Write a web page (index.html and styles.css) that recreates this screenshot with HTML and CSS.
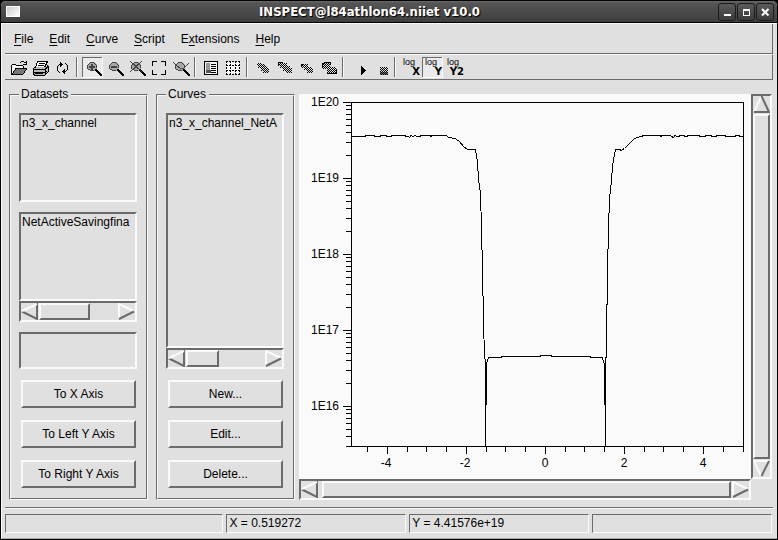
FILE: index.html
```html
<!DOCTYPE html>
<html lang="en">
<head>
<meta charset="utf-8">
<title>INSPECT@l84athlon64.niiet v10.0</title>
<link rel="stylesheet" href="styles.css">
</head>
<body>
<div class="window">
  <header class="titlebar">
    <span class="sysmenu"></span>
    <h1 class="title">INSPECT@l84athlon64.niiet v10.0</h1>
    <div class="wm">
      <button class="wm-btn" aria-label="Minimize"><svg viewBox="0 0 16 16"><path d="M5 11h7" stroke-width="2"/></svg></button>
      <button class="wm-btn" aria-label="Maximize"><svg viewBox="0 0 16 16"><path d="M5 5.500h7M5.500 6v5M11.500 6v5M5 11.500h7M5 6.500h7"/></svg></button>
      <button class="wm-btn" aria-label="Close"><svg viewBox="0 0 16 16"><path d="M5 5l6.500 6.500M11.500 5L5 11.500" stroke-width="2"/></svg></button>
    </div>
  </header>

  <div class="client">
    <nav class="menubar">
      <button class="menu"><u>F</u>ile</button>
      <button class="menu"><u>E</u>dit</button>
      <button class="menu"><u>C</u>urve</button>
      <button class="menu"><u>S</u>cript</button>
      <button class="menu">E<u>x</u>tensions</button>
      <button class="menu"><u>H</u>elp</button>
    </nav>

    <div class="toolbar">
      <svg class="defs" aria-hidden="true">
        <defs>
          <pattern id="dots" width="2" height="2" patternUnits="userSpaceOnUse"><path class="k" d="M0 0h1v1H0zM1 1h1v1H1z"/></pattern>
          <g id="lens">
            <path d="M8 5h4l3 3v3l-3 3H8l-3-3V8z" fill="#a8a8a8"/>
            <path d="M8 5.500h4M8 13.500h4M5.500 8v4M14.500 8v3M6 7.500h1M7 6.500h1M12 6.500h1M13 7.500h1M6 12.500h2" fill="none" stroke="#444"/>
            <path d="M13 12h2v1h1v1h1v1h1v1h1v1h1v2h-2v-1h-1v-1h-1v-1h-1v-1h-1v-1h-1z" fill="#000"/>
          </g>
        </defs>
      </svg>
      <button class="tool" aria-label="Open"><svg viewBox="0 0 22 22">
        <path class="k" d="M3 8h1v10H3zM4 7h4v1H4zM8 8h7v1H8zM15 9h1v3h-1z"/>
        <path d="M4 8h4v1h7v3H8l-4 6z" fill="#f5f5f5"/>
        <path d="M8 12h11l-4 5H4z" fill="#777"/>
        <path class="s" d="M7 11.500h12M18.500 12v1M17.500 13v1M16.500 14v2M15.500 16v1M3 17.500h12M7.500 12v1M6.500 13v1M5.500 14v2M4.500 16v1M12 5.500h1M13 4.500h3M16 5.500h2M18.500 4v4M15 7.500h3"/>
      </svg></button>
      <button class="tool" aria-label="Print"><svg viewBox="0 0 22 22">
        <path d="M8 4h9l-3 7H5z" fill="#fff"/>
        <path d="M3 12l3-2h10l3-2v6l-4 4H4l-1-1z" fill="#bbb"/>
        <path class="s" d="M7.500 4.500h10l-3 6M7.500 4.500l-2 6M9 6.500h6M8 8.500h6M5.500 10.500h-1l-1 1v5l1 2h10l4-4v-5l-1-1h-1M3 12.500h12l3-3M15.500 12v6M4 15.500h11"/>
        <path class="k" d="M5 16h8v1H5zM16 14h1v1h-1zM16 16h1v1h-1z"/>
      </svg></button>
      <button class="tool" aria-label="Reload"><svg viewBox="0 0 22 22">
        <path class="k" d="M8 5h1v1h1v1h1v1h-1v1H9v1H8V8H7V7h1zM6 8h1v1H6zM5 9h1v5H5zM6 14h1v1H6zM7 15h1v1H7zM13 17h-1v-1h-1v-1h-1v-1h1v-1h1v-1h1v2h1v1h-1zM14 13h1v1h-1zM15 8h1v5h-1zM14 7h1v1h-1zM13 6h1v1h-1z"/>
      </svg></button>
      <span class="sep"></span>
      <button class="tool is-on" aria-label="Zoom in" aria-pressed="true"><svg viewBox="0 0 22 22"><use href="#lens"/><path d="M7 9h6v2H7zM9 7h2v6H9z" fill="#444"/></svg></button>
      <button class="tool" aria-label="Zoom out"><svg viewBox="0 0 22 22"><use href="#lens"/><path d="M7 9h6v2H7z" fill="#444"/></svg></button>
      <button class="tool" aria-label="Zoom reset"><svg viewBox="0 0 22 22"><use href="#lens"/><path d="M4 4l12 11M16 4L4 15" stroke="#444"/></svg></button>
      <button class="tool" aria-label="Zoom to fit"><svg viewBox="0 0 22 22"><path class="s" d="M4.500 9V4.500H9M13 4.500h4.500V9M17.500 13v4.500H13M9 17.500H4.500V13"/></svg></button>
      <button class="tool" aria-label="Zoom curve"><svg viewBox="0 0 22 22"><use href="#lens"/><path d="M3 5l4 4 3 2h4l5-5" fill="none" stroke="#444"/></svg></button>
      <span class="sep"></span>
      <button class="tool" aria-label="Legend"><svg viewBox="0 0 22 22"><path d="M4 4h14v14H4z" fill="#f5f5f5"/><path class="s" d="M4.500 4.500h13v13h-13z"/><path d="M6 6h4v10H6z" fill="#999"/><path d="M6 13h5v3H6z" fill="#555"/><path class="s" d="M11 7.500h5M11 9.500h5M11 11.500h5M11 13.500h5M11 15.500h5"/></svg></button>
      <button class="tool" aria-label="Grid"><svg viewBox="0 0 22 22"><path d="M4 4h14v14H4z" fill="#f5f5f5"/><path class="s" stroke-dasharray="2 1" d="M4 4.500h14M4 8.500h14M4 13.500h14M4 17.500h14M4.500 4v14M8.500 4v14M13.500 4v14M17.500 4v14"/></svg></button>
      <span class="sep"></span>
      <button class="tool" aria-label="Curve front"><svg viewBox="0 0 22 22"><path fill="url(#dots)" d="M5 6h5v1h3v2h2v2h2v5h-6v-2H9v-3H6V9H5z"/></svg></button>
      <button class="tool" aria-label="Curve forward"><svg viewBox="0 0 22 22"><path fill="url(#dots)" d="M4 5h5v1h4v3h3v2h2v5h-6v-2H9v-3H6V9H4z"/><path class="s" d="M4.500 9V5.500H9"/></svg></button>
      <button class="tool" aria-label="Curve backward"><svg viewBox="0 0 22 22"><path fill="url(#dots)" d="M5 7h7v3h4v2h1v4h-6v-3H8v-2H5z"/><path class="s" d="M5.500 10V7.500H8"/></svg></button>
      <button class="tool" aria-label="Curve back"><svg viewBox="0 0 22 22"><path fill="url(#dots)" d="M5 6h7v4h6v6h-9v-4H5z"/><path class="s" d="M4.500 11V6.500H6M6 5.500h6V8M9 16.500h9v-5"/></svg></button>
      <span class="sep"></span>
      <button class="tool" aria-label="Run"><svg viewBox="0 0 22 22"><path class="k" d="M13 9h1v1h1v1h1v1h1v1h1v1h-1v1h-1v1h-1v1h-1v1h-1z"/></svg></button>
      <button class="tool" aria-label="Stop"><svg viewBox="0 0 22 22"><path fill="url(#dots)" d="M10 10h8v8h-8z"/><path class="k" d="M10 15h8v3h-8z" opacity=".5"/></svg></button>
      <span class="sep"></span>
      <button class="tool log"><span class="log-fn">log</span><span class="log-ax">X</span></button>
      <button class="tool log is-on" aria-pressed="true"><span class="log-fn">log</span><span class="log-ax">Y</span></button>
      <button class="tool log"><span class="log-fn">log</span><span class="log-ax">Y2</span></button>
    </div>

    <main class="panes">
      <fieldset class="group">
        <legend>Datasets</legend>
        <select class="list list-short" size="5" aria-label="Datasets">
          <option>n3_x_channel</option>
        </select>
        <div class="scrolled">
          <select class="list list-short" size="5" aria-label="Variables">
            <option>NetActiveSavingfina</option>
          </select>
          <div class="scroll">
            <button class="arrow" aria-label="Scroll left"><svg viewBox="0 0 17 17"><path class="dk" d="M16 0v16L1 8.500"/><path class="lt" d="M1 8L16 1"/></svg></button>
            <div class="trough"><div class="thumb thumb-a"></div></div>
            <button class="arrow" aria-label="Scroll right"><svg viewBox="0 0 17 17"><path class="lt" d="M1 16V1l15 7"/><path class="dk" d="M16 8.500L1 16"/></svg></button>
          </div>
        </div>
        <input class="entry" type="text" aria-label="Filter">
        <div class="actions">
          <button class="push">To X Axis</button>
          <button class="push">To Left Y Axis</button>
          <button class="push">To Right Y Axis</button>
        </div>
      </fieldset>

      <fieldset class="group">
        <legend>Curves</legend>
        <div class="scrolled grow">
          <select class="list" size="5" aria-label="Curves">
            <option>n3_x_channel_NetA</option>
          </select>
          <div class="scroll">
            <button class="arrow" aria-label="Scroll left"><svg viewBox="0 0 17 17"><path class="dk" d="M16 0v16L1 8.500"/><path class="lt" d="M1 8L16 1"/></svg></button>
            <div class="trough"><div class="thumb thumb-b"></div></div>
            <button class="arrow" aria-label="Scroll right"><svg viewBox="0 0 17 17"><path class="lt" d="M1 16V1l15 7"/><path class="dk" d="M16 8.500L1 16"/></svg></button>
          </div>
        </div>
        <div class="actions">
          <button class="push">New...</button>
          <button class="push">Edit...</button>
          <button class="push">Delete...</button>
        </div>
      </fieldset>

      <section class="plot">
        <svg class="chart" viewBox="299 94 452 385" role="img" aria-label="Net active doping against X">
          <defs>
            <path id="decade" d="M343 .5h8M346 3.500h5M346 7.500h5M346 12.500h5M346 17.500h5M346 23.500h5M346 30.500h5M346 40.500h5M346 53.500h5"/>
          </defs>
          <g class="axis">
            <path d="M351.500 102.500h392v344h-392z"/>
            <use href="#decade" y="102"/>
            <use href="#decade" y="178"/>
            <use href="#decade" y="254"/>
            <use href="#decade" y="330"/>
            <path d="M343 406.500h8M346 409.500h5M346 413.500h5M346 418.500h5M346 423.500h5M346 429.500h5M346 436.500h5M346 446.500h5"/>
            <path d="M387.500 447v7M466.500 447v7M545.500 447v7M624.500 447v7M703.500 447v7"/>
            <path d="M367.500 447v5M407.500 447v5M426.500 447v5M446.500 447v5M486.500 447v5M505.500 447v5M525.500 447v5M565.500 447v5M584.500 447v5M604.500 447v5M644.500 447v5M663.500 447v5M683.500 447v5M723.500 447v5M743.500 447v5"/>
          </g>
          <g class="tick-y">
            <text x="339" y="106">1E20</text>
            <text x="339" y="182">1E19</text>
            <text x="339" y="258">1E18</text>
            <text x="339" y="334">1E17</text>
            <text x="339" y="410">1E16</text>
          </g>
          <g class="tick-x">
            <text x="386" y="467">-4</text>
            <text x="465" y="467">-2</text>
            <text x="545" y="467">0</text>
            <text x="624" y="467">2</text>
            <text x="703" y="467">4</text>
          </g>
          <path class="curve" d="M352 136.500H365V135.500H374V136.500H380V135.500H386V136.500H391V135.500H405V136.500H408L409.500 137.500L411 135.500L413 136.500L415 135.500L417 136.500H420V135.500H430V136.500H431V135.500H446L449 137.500L455 138.500L459.500 141.500L463.500 146.500L467.500 149.500H471L472 149.500H475.500L477.500 162.500L478.500 179.500L480.500 193.500L481.500 228.500L482.500 270.500L483.500 320.500L484.500 357.500L485.500 360.500V446"/>
          <path class="curve" d="M486.500 405V364L488.500 357.500H501V356.500H540V355.500H551V356.500H590V357.500H602L604.500 364V405"/>
          <path class="curve" d="M605.500 446V358L606.500 357.500V340.500L607.500 270.500L608.500 228.500L609.500 198.500L611.500 180.500L612.500 165.500L615.500 149.500H620L621 150.500L624.500 148.500L630.500 142.500L634.500 138.500L641 136.500L644 135.500H660V136.500H661V135.500H670L673.500 137.500L675 135.500L677 136.500H679V135.500H684V136.500H687V135.500H699V136.500H705V135.500H711V136.500H716V135.500H725V136.500H735V135.500H739V136.500H743"/>
        </svg>
        <div class="scroll scroll-v">
          <button class="arrow" aria-label="Scroll up"><svg viewBox="0 0 17 17"><path class="lt" d="M1 16L8 1"/><path class="dk" d="M8.500 0L16 16H1"/></svg></button>
          <div class="trough"><div class="thumb"></div></div>
          <button class="arrow" aria-label="Scroll down"><svg viewBox="0 0 17 17"><path class="lt" d="M16 1H1l7 15"/><path class="dk" d="M8.500 16L16 1"/></svg></button>
        </div>
        <div class="scroll scroll-h">
          <button class="arrow" aria-label="Scroll left"><svg viewBox="0 0 17 17"><path class="dk" d="M16 0v16L1 8.500"/><path class="lt" d="M1 8L16 1"/></svg></button>
          <div class="trough"><div class="thumb"></div></div>
          <button class="arrow" aria-label="Scroll right"><svg viewBox="0 0 17 17"><path class="lt" d="M1 16V1l15 7"/><path class="dk" d="M16 8.500L1 16"/></svg></button>
        </div>
      </section>
    </main>

    <footer class="status">
      <div class="cell cell-wide"></div>
      <div class="cell">X = 0.519272</div>
      <div class="cell">Y = 4.41576e+19</div>
      <div class="cell"></div>
    </footer>
  </div>
</div>
</body>
</html>
```
FILE: styles.css
```css
:root {
  --face: #e0e0e0;
  --light: #fafafa;
  --dark: #6b6b6b;
}

* { box-sizing: border-box; }

body {
  margin: 0;
  background: #000;
  color: #000;
  font: 12px/14px "Liberation Sans", Arial, sans-serif;
}

button, select, input {
  margin: 0;
  padding: 0;
  border: 0;
  border-radius: 0;
  outline: 0;
  background: none;
  color: inherit;
  font: inherit;
}

svg { display: block; }

.window {
  display: flex;
  flex-direction: column;
  min-height: 100vh;
  border: 1px solid #000;
  border-radius: 6px 6px 0 0;
  background: var(--face);
  overflow: hidden;
}

/* title bar */
.titlebar {
  display: flex;
  align-items: center;
  height: 22px;
  padding: 0 4px 0 5px;
  border-bottom: 1px solid #000;
  background: linear-gradient(#6a6a6a, #555 2px, #3e3e3e);
}

.sysmenu {
  width: 14px;
  height: 11px;
  border: 1px solid #fff;
  background: linear-gradient(135deg, #ccc, #fff);
}

.title {
  flex: 1;
  margin: 0;
  color: #fff;
  font: bold 13px/20px "DejaVu Sans Condensed", "DejaVu Sans", sans-serif;
  text-align: center;
  text-shadow: 1px 1px 1px #000;
}

.wm { display: flex; gap: 3px; }

.wm-btn {
  width: 16px;
  height: 16px;
  border-radius: 3px;
  background: linear-gradient(#5a5a5a, #3c3c3c);
  box-shadow: 0 0 0 1px #1c1c1c;
}

.wm-btn svg {
  width: 16px;
  height: 16px;
  fill: none;
  stroke: #fff;
}

/* client area */
.client {
  display: flex;
  flex: 1;
  flex-direction: column;
  padding: 0 4px 0 3px;
  border-top: 1px solid var(--light);
  border-left: 1px solid var(--light);
  border-bottom: 1px solid #aaa;
}

.menubar {
  display: flex;
  align-items: center;
  height: 30px;
  padding-left: 1px;
  border-right: 1px solid var(--dark);
  border-bottom: 1px solid var(--dark);
}

.menu { height: 24px; padding: 0 8px; }

.menu u { text-underline-offset: 2px; text-decoration-skip-ink: none; }

.toolbar {
  display: flex;
  height: 26px;
  padding: 2px 3px;
  border-top: 1px solid var(--light);
  border-right: 1px solid var(--dark);
  border-bottom: 1px solid var(--dark);
}

.defs { position: absolute; width: 0; height: 0; }

.tool { flex: none; width: 22px; height: 22px; }

.tool svg { width: 22px; height: 22px; shape-rendering: crispEdges; }

.tool .k, .defs .k { fill: #000; }

.tool .s { fill: none; stroke: #000; }

.tool.is-on {
  background:
    linear-gradient(var(--dark), var(--dark)) 0 0 / 20px 1px no-repeat,
    linear-gradient(var(--dark), var(--dark)) 0 0 / 1px 20px no-repeat,
    linear-gradient(var(--light), var(--light)) 0 20px / 21px 1px no-repeat,
    linear-gradient(var(--light), var(--light)) 20px 0 / 1px 21px no-repeat,
    linear-gradient(#ebebeb, #ebebeb) 0 0 / 21px 21px no-repeat;
}

.log {
  display: flex;
  flex-direction: column;
  padding: 1px 2px 0 3px;
}

.log-fn {
  font-size: 9px;
  line-height: 9px;
  text-align: left;
}

.log-ax {
  align-self: flex-end;
  font: bold 10px/10px "DejaVu Sans", sans-serif;
}

.sep {
  flex: none;
  width: 2px;
  height: 20px;
  margin: 0 4px 0 2px;
  border-left: 1px solid var(--dark);
  border-right: 1px solid var(--light);
}

/* main panes */
.panes {
  display: grid;
  flex: 1;
  grid-template-columns: 139px 139px minmax(0, 1fr);
  margin-top: 7px;
  padding: 0 1px 0 4px;
  column-gap: 8px;
}

.group {
  position: relative;
  display: flex;
  flex-direction: column;
  gap: 10px;
  min-width: 0;
  margin: 0;
  padding: 12px 10px 11px 9px;
  border: 1px solid;
  border-color: var(--dark) var(--light) var(--light) var(--dark);
}

/* the padding box starts below the legend, so the inner line reaches up past it */
.group::before {
  content: "";
  position: absolute;
  inset: -6px 0 0;
  border: 1px solid;
  border-color: var(--light) var(--dark) var(--dark) var(--light);
  pointer-events: none;
}

.group legend {
  position: relative;
  z-index: 1;
  padding: 0 3px 0 2px;
  background: var(--face);
}

.scrolled { display: flex; flex-direction: column; }

.grow { flex: 1; }

.list, .entry, .scroll {
  border: 2px solid;
  border-color: var(--dark) var(--light) var(--light) var(--dark);
}

.list {
  flex: 1;
  width: 100%;
  min-height: 0;
  padding-top: 1px;
  overflow: hidden;
  scrollbar-width: none;
  appearance: none;
}

.list option { padding: 0 1px; }

.list-short { flex: none; height: 89px; }

.entry { width: 100%; height: 37px; }

.actions {
  display: flex;
  flex-direction: column;
  gap: 12px;
  padding: 1px 1px 0 2px;
}

.push {
  height: 28px;
  border: 2px solid;
  border-color: var(--light) var(--dark) var(--dark) var(--light);
}

/* scroll bars */
.scroll { display: flex; height: 21px; }

.arrow { flex: none; width: 17px; height: 17px; }

.arrow svg { width: 17px; height: 17px; fill: none; stroke-width: 2; }

.arrow .lt { stroke: var(--light); }

.arrow .dk { stroke: var(--dark); }

.trough { display: flex; flex: 1; padding: 0 1px; }

.thumb {
  width: 100%;
  border: 2px solid;
  border-color: var(--light) var(--dark) var(--dark) var(--light);
}

.thumb-a { width: 66%; }

.thumb-b { width: 42%; }

.scroll-v { flex-direction: column; width: 21px; height: auto; }

.scroll-v .trough { padding: 1px 0; }

.scroll-h .trough { padding: 0 1px 0 4px; }

/* plot */
.plot {
  display: grid;
  grid-template-columns: minmax(0, 1fr) 21px;
  grid-template-rows: minmax(0, 1fr) 21px;
  margin: 7px 0 0 -4px;
}

.chart { width: 100%; height: 100%; background: var(--light); }

.axis, .curve { fill: none; stroke: #000; shape-rendering: crispEdges; }

.tick-y { text-anchor: end; }

.tick-x { text-anchor: middle; }

/* status bar */
.status {
  display: flex;
  gap: 3px;
  margin-top: 7px;
  padding: 6px 1px 5px 0;
  border-top: 1px solid var(--dark);
  box-shadow: inset 0 1px var(--light);
}

.cell {
  flex: 180;
  height: 19px;
  padding: 1px 2px;
  border: 1px solid;
  border-color: var(--dark) var(--light) var(--light) var(--dark);
}

.cell-wide { flex: 220; }
```
